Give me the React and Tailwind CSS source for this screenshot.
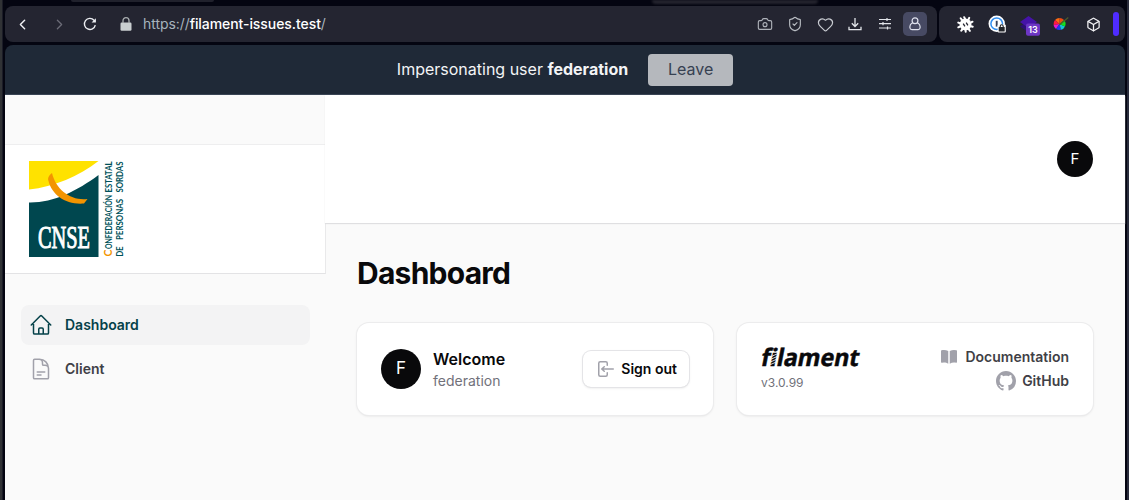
import React from "react";
import { Camera, ShieldCheck, Heart, Box, ChevronLeft, ChevronRight } from "lucide-react";
import {
  HiOutlineHome,
  HiOutlineDocumentText,
  HiMiniArrowLeftOnRectangle,
  HiMiniBookOpen,
} from "react-icons/hi2";
import { BsGithub } from "react-icons/bs";

function ReloadIcon() {
  return (
    <svg width="14" height="14" viewBox="0 0 14 14" fill="none">
      <path d="M12.3 8.1A5.5 5.5 0 1 1 11 3.2l1.2 1.3" stroke="#eceef2" strokeWidth="1.4" />
      <path d="M12.9 1.2v4.3H8.6z" fill="#eceef2" />
    </svg>
  );
}

function LockIcon() {
  return (
    <svg width="12" height="14" viewBox="0 0 12 14" fill="none">
      <rect x="0.5" y="5.6" width="11" height="8.2" rx="1.2" fill="#c9ced0" />
      <path d="M3 6V3.7a3 3 0 0 1 6 0V6" stroke="#a8adaf" strokeWidth="1.3" />
    </svg>
  );
}

function DownloadIcon() {
  return (
    <svg width="14" height="14" viewBox="0 0 14 14" fill="none" stroke="#e2e5ea" strokeWidth="1.3">
      <path d="M7 1v8.2M3.8 6.3 7 9.5l3.2-3.2M1 9.8v2.9h12V9.8" />
    </svg>
  );
}

function TuneIcon() {
  return (
    <svg width="14" height="14" viewBox="0 0 14 14" fill="none" stroke="#e2e5ea" strokeWidth="1.2">
      <path d="M1 2.5h12M1 6.7h12M1 11h12M9 .9v3.2M5 5.1v3.2M9.5 9.4v3.2" />
    </svg>
  );
}

function PersonIcon() {
  return (
    <svg width="14" height="16" viewBox="0 0 14 16" fill="none" stroke="#dfe2ee" strokeWidth="1.2">
      <circle cx="7" cy="4.8" r="2.9" />
      <path d="M4.7 6.7C2.6 7.8 1.7 9.6 1.9 11.8c.1 1.2.9 1.9 2 1.9h6.2c1.1 0 1.9-.7 2-1.9.2-2.2-.7-4-2.8-5.1" />
    </svg>
  );
}

function GearIcon() {
  return (
    <svg width="17" height="17" viewBox="0 0 17 17">
      <circle cx="8.5" cy="8.5" r="5.9" fill="#fff" />
      <g stroke="#fff" strokeWidth="2" strokeLinecap="round">
        <path d="M8 3 7.2 1.200M11.500 3.500l.7-1.700M14 6.500l1.500-.8M14 10.300l1.700.5M11.800 13.200l1 1.600M8.500 14l.2 1.700M5.300 13.300l-1 1.400M3 10.500l-1.700.8M3 7.200 1.300 6.600M5 3.800 3.700 2.300" />
      </g>
      <path d="M6.200 7.600l1.700 2.700M9.200 6.700l1.700 2.700" stroke="#23242f" strokeWidth="1.300" />
    </svg>
  );
}

function PasswordIcon() {
  return (
    <svg width="18" height="18" viewBox="0 0 18 18">
      <circle cx="8.7" cy="8.7" r="8.2" fill="#fff" />
      <circle cx="8.7" cy="8.7" r="5.8" fill="none" stroke="#2f8df0" strokeWidth="1.5" />
      <path d="M8.7 5.8v5.8" stroke="#35415c" strokeWidth="1.9" />
      <rect x="9.6" y="9.4" width="8.2" height="8" rx="1" fill="#fff" />
      <rect x="10.7" y="12" width="6" height="4.6" rx=".6" fill="#24262b" />
      <path d="M12.2 12.4v-1.1a1.5 1.5 0 0 1 3 0v1.1" fill="none" stroke="#24262b" strokeWidth="1.1" />
    </svg>
  );
}

function LayersIcon() {
  return (
    <svg width="22" height="20" viewBox="0 0 22 20">
      <path d="M0 10.5 8.5 4.5 17 10.5l-8.5 6z" fill="#2c0f72" />
      <path d="M0 6 8.5 0 17 6l-8.5 6z" fill="#4513a8" />
      <rect x="6" y="7.5" width="14" height="12.3" rx="2" fill="#6d36c4" />
      <text x="13" y="17.2" fill="#fff" fontSize="9" fontWeight="600" fontFamily="Inter, sans-serif" textAnchor="middle">13</text>
    </svg>
  );
}

function ColorWheelIcon() {
  return (
    <svg width="16" height="14" viewBox="0 0 16 14">
      <path d="M6.5 7V1A6 6 0 0 1 11 3z" fill="#f04a10" />
      <path d="M6.5 7 2 3a6 6 0 0 1 4.5-2z" fill="#ff6a12" />
      <path d="M6.5 7 .6 8A6 6 0 0 1 2 3z" fill="#ff1d3d" />
      <path d="M6.5 7 3 11.900A6 6 0 0 1 .6 8z" fill="#e817d0" />
      <path d="M6.5 7 8 12.800A6 6 0 0 1 3 11.900z" fill="#2236f0" />
      <path d="M6.5 7 12 9.500A6 6 0 0 1 8 12.800z" fill="#12c5d8" />
      <path d="M6.5 7 11 3a6 6 0 0 1 1 6.500z" fill="#12e01f" />
      <path d="M6.5 7.800 15.300.5" stroke="#4d5a2c" strokeWidth="1.300" />
    </svg>
  );
}

function CnseLogo() {
  return (
    <svg width="98" height="96" viewBox="0 0 98 96" className="block overflow-visible">
      <path d="M0 0H69.5C50 15 25 26 0 28.5z" fill="#ffe200" />
      <path d="M0 41.5C24 42 48 30 69.5 14V96H0z" fill="#00474f" />
      <path d="M23 12C19.5 15 18.5 17 19.5 20 23 34 37 44 55 42.5L58.5 38C42 40 27 29 23 12z" fill="#f39400" />
      <text x="9" y="87" fill="#fff" stroke="#fff" strokeWidth="1" fontSize="31" fontFamily="Liberation Serif, serif" textLength="52" lengthAdjust="spacingAndGlyphs">CNSE</text>
      <g fill="#00525a" fontFamily="Lato, sans-serif" fontWeight="700">
        <text transform="translate(83 95.5) rotate(-90)" fontSize="11.5" fill="#f39400" textLength="7" lengthAdjust="spacingAndGlyphs">C</text>
        <text transform="translate(83 88) rotate(-90)" fontSize="9" textLength="54" lengthAdjust="spacingAndGlyphs">ONFEDERACIÓN</text>
        <text transform="translate(83 31.5) rotate(-90)" fontSize="9" textLength="31" lengthAdjust="spacingAndGlyphs">ESTATAL</text>
        <text transform="translate(94 95.5) rotate(-90)" fontSize="9" textLength="10" lengthAdjust="spacingAndGlyphs">DE</text>
        <text transform="translate(94 79) rotate(-90)" fontSize="9" textLength="41" lengthAdjust="spacingAndGlyphs">PERSONAS</text>
        <text transform="translate(94 31.5) rotate(-90)" fontSize="9" textLength="31" lengthAdjust="spacingAndGlyphs">SORDAS</text>
      </g>
    </svg>
  );
}

function FilamentLogo() {
  return (
    <svg width="100" height="24" viewBox="0 0 100 24" className="block overflow-visible">
      <g transform="translate(0 18.8) skewX(-11)">
        <text x="-1" y="0" fill="#09090b" stroke="#09090b" strokeWidth=".5" fontSize="24" fontWeight="700" fontFamily="Noto Sans, sans-serif" textLength="98" lengthAdjust="spacingAndGlyphs">filament</text>
        <path d="M9 -9.5l6-3M9 -6.7l6-3M9 -3.9l6-3M9 -1.1l6-3" stroke="#fff" strokeWidth=".8" />
      </g>
    </svg>
  );
}

function Cell({ children }) {
  return <div className="flex h-9 w-[30px] items-center justify-center">{children}</div>;
}

function Ext({ children }) {
  return <div className="flex h-9 w-8 items-center justify-center">{children}</div>;
}

function BrowserBar() {
  return (
    <div className="flex h-9 gap-[2px]">
      <div className="flex w-[932px] items-center rounded-lg bg-[#242531] pr-[7px]">
        <div className="flex w-[34px] justify-center"><ChevronLeft size={17} strokeWidth={2} color="#f1f1f5" /></div>
        <div className="ml-[3px] flex w-[34px] justify-center"><ChevronRight size={17} strokeWidth={1.8} color="#6c6d78" /></div>
        <div className="flex w-[28px] justify-center"><ReloadIcon /></div>
        <div className="ml-4 mr-[11px]"><LockIcon /></div>
        <div className="mb-px whitespace-nowrap font-['Inter',sans-serif] text-[14px] tracking-[-0.07px] text-[#a7b4bd]">
          https://<span className="font-medium text-white">filament-issues.test</span>/
        </div>
        <div className="ml-auto flex">
          <Cell><Camera size={16} strokeWidth={1.7} color="#aeb2b9" /></Cell>
          <Cell><ShieldCheck size={16} strokeWidth={1.7} color="#b9bdc3" /></Cell>
          <Cell><Heart size={17} strokeWidth={1.7} color="#c9ccd2" /></Cell>
          <Cell><DownloadIcon /></Cell>
          <Cell><TuneIcon /></Cell>
          <Cell>
            <div className="flex h-6 w-6 items-center justify-center rounded-[5px] bg-[#474a63]"><PersonIcon /></div>
          </Cell>
        </div>
      </div>
      <div className="flex flex-1 items-center rounded-lg bg-[#242531] pl-[10px]">
        <Ext><GearIcon /></Ext>
        <Ext><PasswordIcon /></Ext>
        <Ext><div className="pl-1 pt-1"><LayersIcon /></div></Ext>
        <Ext><ColorWheelIcon /></Ext>
        <Ext><Box size={15} strokeWidth={2} color="#f1f1f4" /></Ext>
        <div className="ml-1 h-6 w-[6px] rounded-full bg-[#4f2cff]" />
      </div>
    </div>
  );
}

function Banner() {
  return (
    <div className="mt-[3px] flex h-[50px] items-center justify-center rounded-t-lg border-b border-[#394454] bg-[#1f2937] text-base text-[#f3f4f6]">
      <div className="mb-px whitespace-nowrap">Impersonating user <span className="font-bold">federation</span></div>
      <div className="ml-5 flex h-8 w-[85px] items-center justify-center rounded-[4px] bg-[#b5b8bd] pb-px text-[#374151]">Leave</div>
    </div>
  );
}

function Sidebar() {
  return (
    <div className="w-[321px] shrink-0">
      <div className="h-[49px] w-80" />
      <div className="flex h-[130px] w-[321px] items-center border-y border-r border-t-[#eeeeef] border-b-[#e3e3e5] border-r-[#e9e9ea] bg-white pl-6">
        <CnseLogo />
      </div>
      <div className="mt-[31px] flex flex-col gap-1 pl-4 text-sm font-semibold">
        <div className="flex h-10 w-[289px] items-center gap-3 rounded-lg bg-[#f3f3f4] px-2 text-[#054149]">
          <HiOutlineHome size={24} />Dashboard
        </div>
        <div className="flex h-10 w-[289px] items-center gap-3 px-2 text-[#3f3f46]">
          <HiOutlineDocumentText size={24} color="#a1a1aa" />Client
        </div>
      </div>
    </div>
  );
}

function Main() {
  return (
    <div className="-ml-px min-w-0 flex-1">
      <div className="flex h-32 items-center justify-end bg-white pr-8 shadow-[0_1px_1px_#dfdfe1]">
        <div className="flex h-9 w-9 items-center justify-center rounded-full bg-[#09090b] text-[15px] text-white">F</div>
      </div>
      <div className="px-8 pt-8">
        <h1 className="text-[30px] font-bold leading-9 tracking-[-0.75px] text-[#09090b]">Dashboard</h1>
        <div className="mt-8 flex gap-6">
          <div className="flex h-[92px] flex-1 items-center rounded-xl bg-white px-6 shadow-sm ring-1 ring-[#ececed]">
            <div className="flex h-10 w-10 items-center justify-center rounded-full bg-[#09090b] text-[17px] text-white">F</div>
            <div className="ml-3 flex-1">
              <div className="text-base font-semibold leading-6 text-[#09090b]">Welcome</div>
              <div className="text-sm leading-5 text-[#71717a]">federation</div>
            </div>
            <div className="flex h-9 items-center gap-1.5 rounded-lg px-3 text-sm font-semibold text-[#09090b] shadow-sm ring-1 ring-[#e4e4e7]">
              <HiMiniArrowLeftOnRectangle size={20} color="#a1a1aa" />Sign out
            </div>
          </div>
          <div className="flex h-[92px] flex-1 items-center justify-between rounded-xl bg-white px-6 shadow-sm ring-1 ring-[#ececed]">
            <div>
              <FilamentLogo />
              <div className="mt-1 text-xs leading-4 text-[#71717a]">v3.0.99</div>
            </div>
            <div className="flex flex-col items-end gap-1 text-sm font-semibold leading-5 text-[#3f3f46]">
              <div className="flex items-center gap-1.5"><HiMiniBookOpen size={20} color="#a1a1aa" />Documentation</div>
              <div className="flex items-center gap-1.5"><BsGithub size={20} color="#a1a1aa" />GitHub</div>
            </div>
          </div>
        </div>
      </div>
    </div>
  );
}

export default function App() {
  return (
    <div className="flex h-[500px] w-[1129px] overflow-hidden bg-[#040511] font-['Inter',sans-serif]">
      <div className="w-[3px] shrink-0 border-r border-[#1b1c27] bg-[#303235]" />
      <div className="ml-[2px] flex w-[1120px] shrink-0 flex-col">
        <div className="flex h-[6px]">
          <div className="ml-[66px] h-[2px] w-[143px] rounded-b bg-[#20212c]" />
          <div className="ml-[438px] h-1 w-[166px] rounded-b bg-[#24242e] blur-[1px]" />
        </div>
        <BrowserBar />
        <Banner />
        <div className="flex flex-1 bg-[#fafafa]">
          <Sidebar />
          <Main />
        </div>
      </div>
      <div className="ml-[2px] w-[2px] bg-[#292c3c]" />
    </div>
  );
}
